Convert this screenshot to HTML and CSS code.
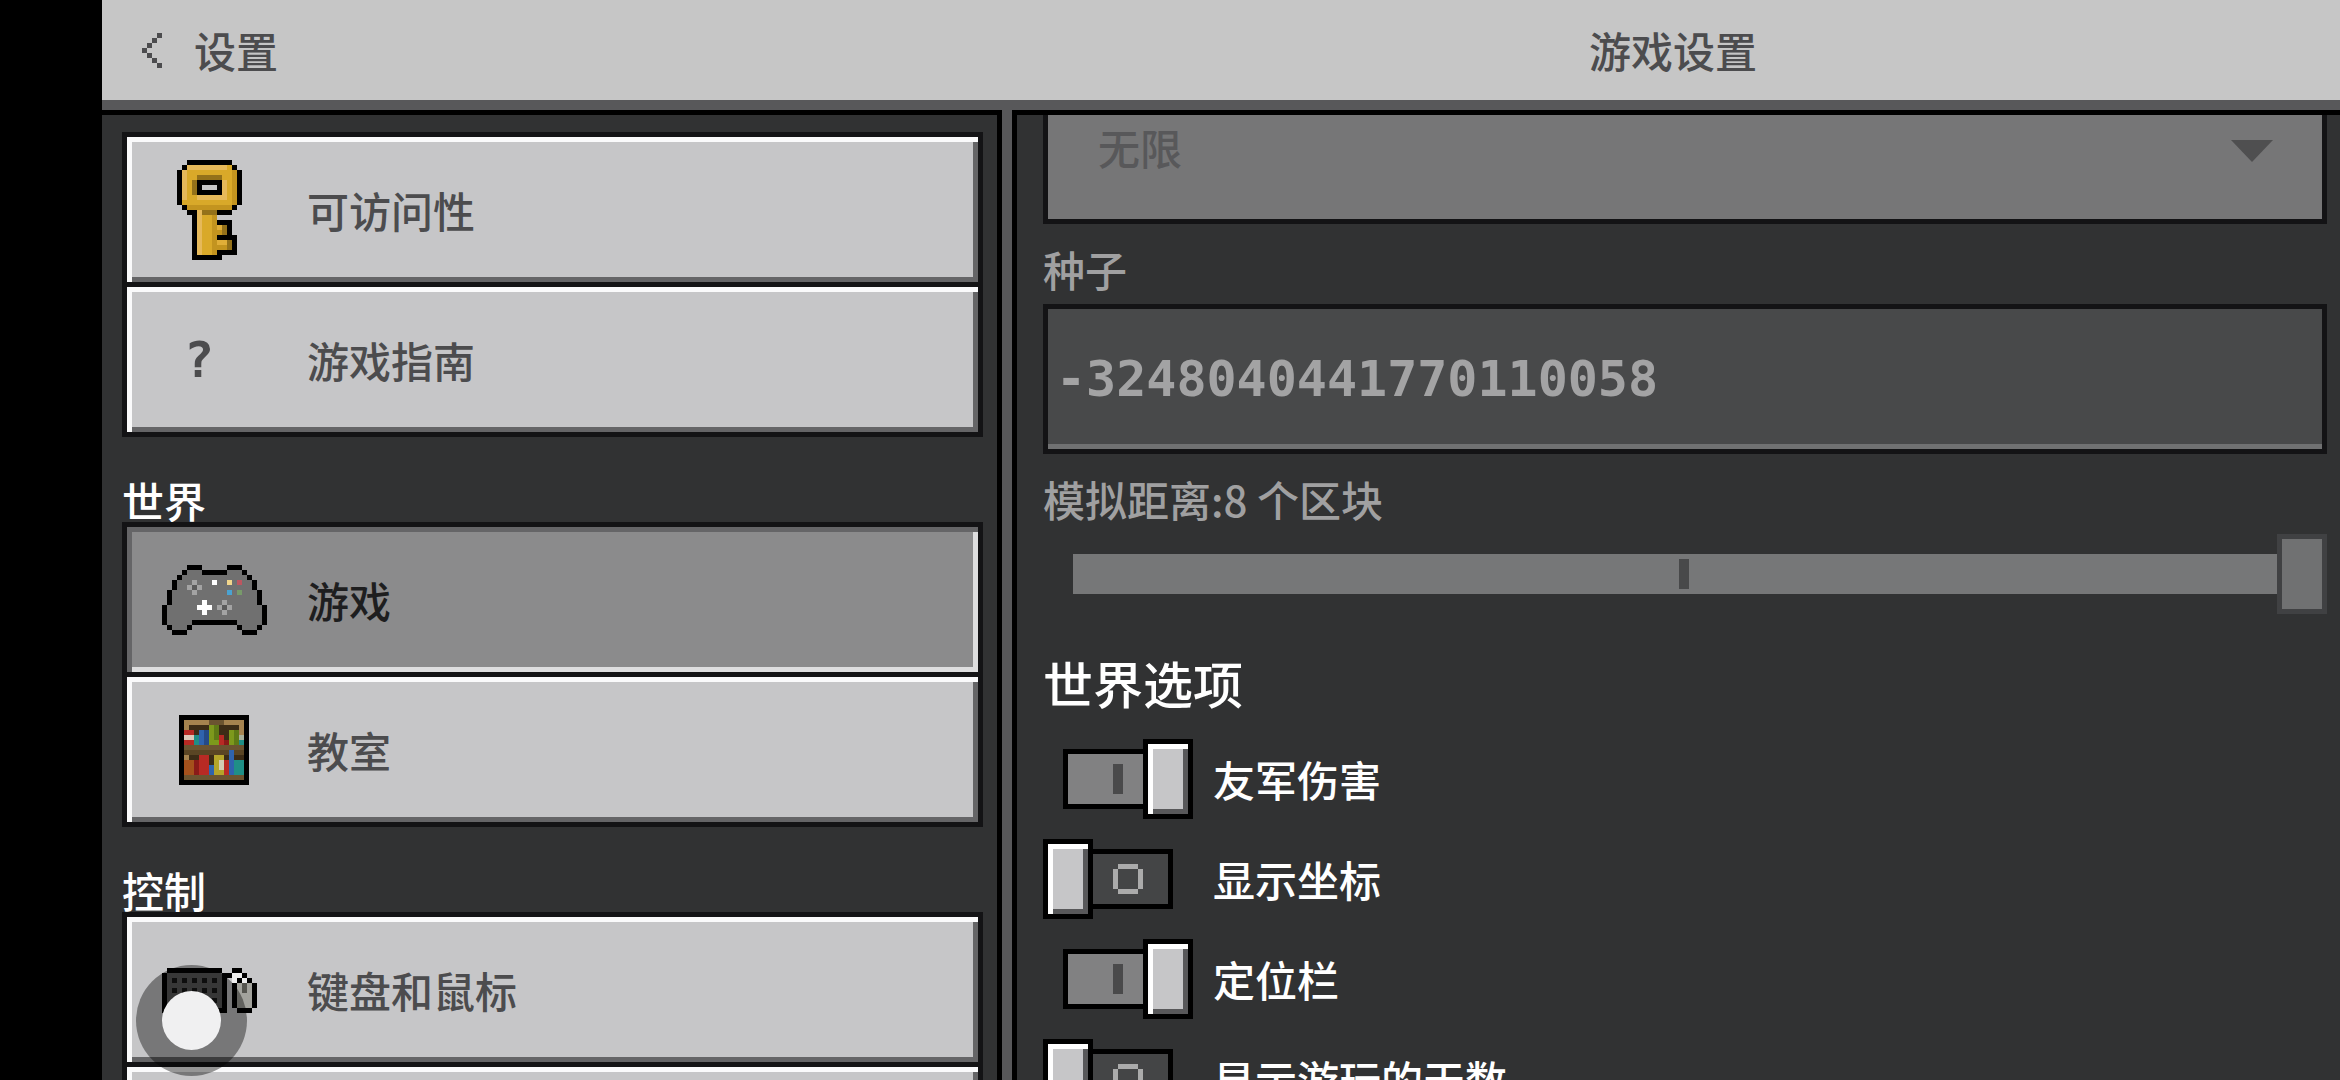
FILE: index.html
```html
<!DOCTYPE html>
<html lang="zh-CN">
<head>
<meta charset="utf-8">
<meta name="viewport" content="width=device-width, initial-scale=1">
<title>游戏设置</title>
<link rel="stylesheet" href="styles.css">
</head>
<body>
<div class="screen">
  <header class="topbar">
    <button class="back" type="button">
      <svg class="back-icon" viewBox="0 0 4 7" shape-rendering="crispEdges" aria-hidden="true"><path d="M3 0h1v1h-1zM2 1h1v1h-1zM1 2h1v1h-1zM0 3h1v1h-1zM1 4h1v1h-1zM2 5h1v1h-1zM3 6h1v1h-1z"/></svg>
      <span>设置</span>
    </button>
    <h1 class="title">游戏设置</h1>
  </header>

  <main class="panes">
    <nav class="sidebar">
      <div class="menu">
        <button class="item" type="button">
          <svg class="icon" viewBox="0 0 22 20" shape-rendering="crispEdges" aria-hidden="true">
            <g transform="translate(3 0)">
              <path d="M2 0h9v1h1v1h1v7h-1v1h-1v1h-3v1h3v3h1v4h-3v1h-6v-9h-1v-1h-1v-1h-1v-7h1v-1h1z"/>
              <path fill="#d9a929" d="M2 1h9v1h1v7h-1v1h-9v-1h-1v-7h1zM4 10h4v9h-4z"/>
              <path fill="#e6b95a" d="M2 1h8v1h-8zM1 2h1v6h-1zM9 4h1v3h-1zM4 7h6v1h-6zM4 10h1v9h-1z"/>
              <path fill="#c3941f" d="M11 2h1v7h-1zM2 9h9v1h-9zM7 10h1v9h-1zM8 14h2v1h-2zM8 17h3v1h-3z"/>
              <path fill="#94711a" d="M4 3h5v1h-5zM3 4h1v3h-1zM5 10h3v1h-3zM9 13h1v2h-1zM10 16h1v2h-1z"/>
              <path fill="#e0ae38" d="M8 13h1v1h-1zM8 16h2v1h-2z"/>
              <path d="M4 4h5v3h-5z"/>
              <path fill="#c6c6c6" d="M5 5h3v1h-3z"/>
            </g>
          </svg>
          <span>可访问性</span>
        </button>
        <button class="item" type="button">
          <span class="icon mark" aria-hidden="true">?</span>
          <span>游戏指南</span>
        </button>
      </div>

      <h2 class="group">世界</h2>
      <div class="menu">
        <button class="item selected" type="button" aria-current="page">
          <svg class="icon" viewBox="0 0 22 20" shape-rendering="crispEdges" aria-hidden="true">
            <g transform="translate(0 3)">
              <path d="M5 0h3v1h5v-1h3v1h1v1h1v1h1v2h1v3h1v4h-1v1h-1v1h-3v-1h-1v-1h-9v1h-1v1h-3v-1h-1v-1h-1v-4h1v-3h1v-2h1v-1h1v-1h1z"/>
              <path fill="#707070" d="M5 1h3v1h5v-1h3v1h1v1h1v2h1v3h1v4h-1v1h-3v-1h-1v-1h-9v1h-1v1h-3v-1h-1v-4h1v-3h1v-2h1v-1h1z"/>
              <path fill="#a3a3a3" d="M6 3h1v1h-1zM5 4h1v1h-1zM7 4h1v1h-1zM6 5h1v1h-1zM12 7h1v1h-1zM11 8h1v1h-1zM13 8h1v1h-1zM12 9h1v1h-1z"/>
              <path fill="#5a5a5a" d="M6 4h1v1h-1zM12 8h1v1h-1z"/>
              <path fill="#fff" d="M10 3h1v1h-1zM8 7h1v1h1v1h-1v1h-1v-1h-1v-1h1z"/>
              <path fill="#f2d68c" d="M13 3h1v1h-1z"/>
              <path fill="#bd5660" d="M15 3h1v1h-1z"/>
              <path fill="#4aa3d2" d="M13 5h1v1h-1z"/>
              <path fill="#789a6a" d="M15 5h1v1h-1z"/>
            </g>
          </svg>
          <span>游戏</span>
        </button>
        <button class="item" type="button">
          <svg class="icon" viewBox="0 0 110 100" shape-rendering="crispEdges" aria-hidden="true">
            <g transform="translate(17 15) scale(5)">
              <path d="M0 0h14v14h-14z"/>
              <path fill="#a5834f" d="M1 1h12v12h-12z"/>
              <path fill="#6b5430" d="M6 1h3v1h-3zM1 6h12v1h-12zM1 12h12v1h-12z"/>
              <path fill="#3c2c16" d="M2 2h10v4h-10zM2 8h11v4h-11z"/>
              <path fill="#5a4524" d="M1 7h12v1h-12z"/>
              <path fill="#b82a24" d="M1 3h2v3h-2zM8 4h1v2h-1zM4 8h2v4h-2zM9 9h1v3h-1z"/>
              <path fill="#ddc8b8" d="M1 4h2v1h-2z"/>
              <path fill="#1f8f86" d="M3 4h1v2h-1zM12 5h1v1h-1zM11 9h2v3h-2z"/>
              <path fill="#2f63ad" d="M4 3h1v3h-1zM6 10h1v2h-1zM10 7h1v5h-1z"/>
              <path fill="#254a86" d="M5 3h1v3h-1z"/>
              <path fill="#7d991c" d="M6 2h2v4h-2zM10 3h1v3h-1z"/>
              <path fill="#5f7a16" d="M7 2h1v3h-1zM11 3h1v3h-1z"/>
              <path fill="#8a1b18" d="M9 5h1v1h-1zM3 9h1v3h-1z"/>
              <path fill="#a8b09a" d="M12 4h1v1h-1z"/>
              <path fill="#b5a52a" d="M7 8h2v4h-2z"/>
              <path fill="#d3ccb4" d="M8 9h1v2h-1z"/>
              <path fill="#a5511c" d="M1 9h2v3h-2z"/>
            </g>
          </svg>
          <span>教室</span>
        </button>
      </div>

      <h2 class="group">控制</h2>
      <div class="menu">
        <button class="item" type="button">
          <svg class="icon" viewBox="0 0 110 100" shape-rendering="crispEdges" aria-hidden="true">
            <g transform="translate(0 28) scale(5)">
              <path d="M1 0h11v1h2v1h-1v7h-13v-8h1z"/>
              <path fill="#5c5c5c" d="M1 1h11v7h-11z"/>
              <path fill="#161616" d="M2 2h1v1h-1zM4 2h1v1h-1zM6 2h1v1h-1zM8 2h1v1h-1zM10 2h1v1h-1zM2 4h1v1h-1zM4 4h1v1h-1zM6 4h1v1h-1zM8 4h1v1h-1zM10 4h1v1h-1zM2 6h1v1h-1zM4 6h1v1h-1zM6 6h1v1h-1zM8 6h1v1h-1zM10 6h1v1h-1z"/>
              <path fill="#a3a39d" d="M15 3h3v5h-3z"/>
              <path fill="#eee" d="M14 1h2v1h-1v1h-1zM16 2h1v1h-1z"/>
              <path fill="#55554f" d="M16 3h1v2h-1z"/>
              <path d="M14 0h2v1h-2zM16 1h1v1h-1zM15 2h1v1h-1zM17 2h1v1h-1zM14 3h1v5h-1zM18 3h1v5h-1zM15 8h3v1h-3z"/>
            </g>
          </svg>
          <span>键盘和鼠标</span>
        </button>
        <button class="item" type="button" aria-label="触控">
          <span class="icon"></span>
        </button>
      </div>
    </nav>

    <section class="content">
      <select class="dropdown" aria-label="世界类型" disabled>
        <option>无限</option>
      </select>

      <label class="label" for="seed">种子</label>
      <input class="textbox" id="seed" type="text" value="-3248040441770110058" disabled>

      <label class="label" for="distance">模拟距离:8 个区块</label>
      <input class="slider" id="distance" type="range" min="4" max="8" step="4" value="8" disabled>

      <h2 class="heading">世界选项</h2>
      <div class="options">
        <label class="option"><input class="toggle" type="checkbox" checked><span>友军伤害</span></label>
        <label class="option"><input class="toggle" type="checkbox"><span>显示坐标</span></label>
        <label class="option"><input class="toggle" type="checkbox" checked><span>定位栏</span></label>
        <label class="option"><input class="toggle" type="checkbox"><span>显示游玩的天数</span></label>
      </div>
    </section>
  </main>
</div>
<div class="touch" aria-hidden="true"></div>
</body>
</html>
```

FILE: styles.css
```css
:root {
  --face: #c6c6c8;
  --ink: #4c4c4e;
  --shade: #656567;
  --edge: #131315;
  --panel: #313233;
  --frame: #58585a;
}

*,
*::before,
*::after {
  box-sizing: border-box;
}

body {
  margin: 0;
  background: #000;
  color: #fff;
  font-family: "Noto Sans CJK SC", sans-serif;
  font-size: 42px;
  font-weight: 500;
  line-height: 50px;
  overflow: hidden;
}

button,
input,
select {
  margin: 0;
  font: inherit;
}

h1,
h2 {
  margin: 0;
  font-weight: 500;
}

.screen {
  display: flex;
  flex-direction: column;
  height: 100vh;
  padding-left: 102px;
}

/* Top bar */
.topbar {
  display: grid;
  grid-template-columns: 225fr 332fr;
  align-items: center;
  flex: none;
  height: 110px;
  border-bottom: 10px solid var(--frame);
  background: #c6c6c6;
  color: var(--ink);
}

.back {
  display: flex;
  align-items: center;
  justify-self: start;
  gap: 32px;
  padding: 0 40px;
  border: 0;
  background: none;
  color: inherit;
}

.back-icon {
  width: 20px;
  height: 35px;
  fill: currentColor;
}

.title {
  font-size: 42px;
  text-align: center;
}

/* Two panes with the frame showing between them */
.panes {
  display: grid;
  grid-template-columns: 225fr 332fr;
  gap: 10px;
  flex: 1;
  min-height: 0;
  background: var(--frame);
}

.sidebar,
.content {
  border-top: 5px solid #000;
  background: var(--panel);
  overflow: hidden;
}

.sidebar {
  padding: 17px 14px 0 20px;
  border-right: 5px solid #000;
}

.content {
  padding: 0 13px 0 26px;
  border-left: 5px solid #000;
}

/* Sidebar menus */
.menu {
  display: flex;
  flex-direction: column;
}

.item {
  display: flex;
  align-items: center;
  gap: 35px;
  height: 155px;
  padding: 0 35px;
  border: 5px solid var(--edge);
  background: var(--face);
  box-shadow: inset 5px 5px 0 #fafafb, inset -5px -5px 0 var(--shade);
  color: var(--ink);
  text-align: left;
}

.item + .item {
  margin-top: -5px;
}

.item.selected {
  background: #8b8b8c;
  box-shadow: inset 5px 5px 0 var(--shade), inset -5px -5px 0 #dededf;
  color: #1e1e1f;
}

.icon {
  flex: none;
  width: 110px;
  height: 100px;
}

.mark {
  padding-left: 22px;
  font-family: "DejaVu Sans Mono", monospace;
  font-size: 50px;
  font-weight: 700;
  line-height: 100px;
}

.group {
  margin: 43px 0 2px;
  font-size: 42px;
  line-height: 40px;
}

/* Form controls */
.label {
  display: block;
  margin: 20px 0 10px;
  color: #a0a0a1;
}

.dropdown {
  display: block;
  width: 100%;
  height: 155px;
  margin-top: -46px;
  padding: 5px 50px;
  border: 5px solid var(--edge);
  border-radius: 0;
  appearance: none;
  background: #767677 url("data:image/svg+xml,%3Csvg xmlns='http://www.w3.org/2000/svg' viewBox='0 0 42 22'%3E%3Cpath fill='%234f4f50' d='M0 0h42l-21 22z'/%3E%3C/svg%3E") no-repeat right 49px top 66px / 42px 22px;
  color: #58585a;
  opacity: 1;
}

.textbox {
  display: block;
  width: 100%;
  height: 150px;
  padding: 0 8px;
  border: 5px solid var(--edge);
  background: #48494a;
  box-shadow: inset 0 -5px 0 #707172;
  color: #a3a3a4;
  font-family: "DejaVu Sans Mono", monospace;
  font-size: 50px;
  font-weight: 700;
}

.slider {
  display: block;
  width: calc(100% - 30px);
  height: 80px;
  margin-left: 30px;
  appearance: none;
  background:
    linear-gradient(#48494a, #48494a) calc(50% - 16px) center / 10px 30px no-repeat,
    linear-gradient(#767778, #767778) center / 100% 40px no-repeat;
}

.slider::-webkit-slider-thumb {
  width: 50px;
  height: 80px;
  border: 5px solid #404143;
  appearance: none;
  background: #707172;
}

.heading {
  margin: 38px 0 27px;
  font-size: 50px;
  line-height: 60px;
}

.options {
  display: flex;
  flex-direction: column;
  gap: 20px;
}

.option {
  display: flex;
  align-items: center;
  gap: 20px;
}

/* Toggle switch: the track is ::before, the knob is ::after */
.toggle {
  position: relative;
  flex: none;
  width: 150px;
  height: 80px;
  appearance: none;
}

.toggle::before,
.toggle::after {
  position: absolute;
  border: 5px solid #000;
  content: "";
}

.toggle::before {
  inset: 10px 20px;
  background:
    linear-gradient(#ababab, #ababab) 50px 10px / 20px 5px no-repeat,
    linear-gradient(#ababab, #ababab) 50px 35px / 20px 5px no-repeat,
    linear-gradient(#ababab, #ababab) 45px 15px / 5px 20px no-repeat,
    linear-gradient(#ababab, #ababab) 70px 15px / 5px 20px no-repeat,
    #444546;
}

.toggle::after {
  top: 0;
  left: 0;
  width: 50px;
  height: 80px;
  background: var(--face);
  box-shadow: inset 5px 5px 0 #fff, inset -5px -5px 0 var(--frame);
}

.toggle:checked::before {
  background: linear-gradient(#4a4a4b, #4a4a4b) 45px 10px / 10px 30px no-repeat, #818182;
}

.toggle:checked::after {
  left: 100px;
}

/* Touch pointer over the screen */
.touch {
  position: absolute;
  top: 965px;
  left: 136px;
  width: 111px;
  height: 111px;
  border: 26px solid rgba(0, 0, 0, 0.4);
  border-radius: 50%;
  background: #f0f0f1 padding-box;
  pointer-events: none;
}
```
